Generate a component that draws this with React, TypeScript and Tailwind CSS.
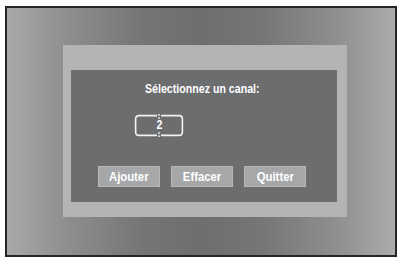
import React from "react";

function ChannelInput() {
  return (
    <div className="relative w-[50px] h-[23px]">
      <svg width="50" height="23" viewBox="0 0 50 23" className="absolute inset-0">
        <path d="M23 1.6 H5 Q1.6 1.6 1.6 5 V18 Q1.6 21.4 5 21.4 H23" fill="none" stroke="#f2f2f2" strokeWidth="1.6" />
        <path d="M27 1.6 H45 Q48.4 1.6 48.4 5 V18 Q48.4 21.4 45 21.4 H27" fill="none" stroke="#f2f2f2" strokeWidth="1.6" />
        <rect x="24.2" y="0" width="1.6" height="1.6" fill="#f2f2f2" />
        <rect x="24.2" y="3.2" width="1.6" height="1.6" fill="#f2f2f2" />
        <rect x="24.2" y="18.2" width="1.6" height="1.6" fill="#f2f2f2" />
        <rect x="24.2" y="21.4" width="1.6" height="1.6" fill="#f2f2f2" />
      </svg>
      <div className="absolute inset-0 flex items-center justify-center text-[12.5px] font-bold text-white leading-none">
        <span className="inline-block scale-x-[0.85]">2</span>
      </div>
    </div>
  );
}

function Btn({ label }: { label: string }) {
  return (
    <div className="w-[62px] h-[21px] bg-[#a6a7a9] border border-[#b6b7b9] flex items-center justify-center text-white font-bold text-[13px] leading-none">
      <span className="inline-block scale-x-[0.87]">{label}</span>
    </div>
  );
}

export default function App() {
  return (
    <div className="w-[401px] h-[259px] bg-white pl-[5px] pt-[6px]" style={{ fontFamily: '"Liberation Sans", Arial, sans-serif' }}>
      <div className="w-[392px] h-[251px] border-2 border-[#262626] pl-[56px] pt-[37px] bg-[linear-gradient(to_right,#a8a9ab_0%,#8e8f91_15%,#747577_35%,#6d6e70_50%,#747577_65%,#8e8f91_85%,#abacae_100%)]">
        <div className="w-[284px] h-[172px] bg-[#b2b4b6] pl-[8px] pt-[25px]">
          <div className="w-[266px] h-[132px] bg-[#6c6d6f] flex flex-col">
            <div className="pt-[12px] pl-[74px] text-white font-bold text-[12.5px] leading-[14px] whitespace-nowrap">
              <span className="inline-block origin-left scale-x-[0.85]">Sélectionnez un canal:</span>
            </div>
            <div className="pl-[63px] pt-[18px]">
              <ChannelInput />
            </div>
            <div className="pl-[27px] pt-[29px] flex gap-[11px]">
              <Btn label="Ajouter" />
              <Btn label="Effacer" />
              <Btn label="Quitter" />
            </div>
          </div>
        </div>
      </div>
    </div>
  );
}
